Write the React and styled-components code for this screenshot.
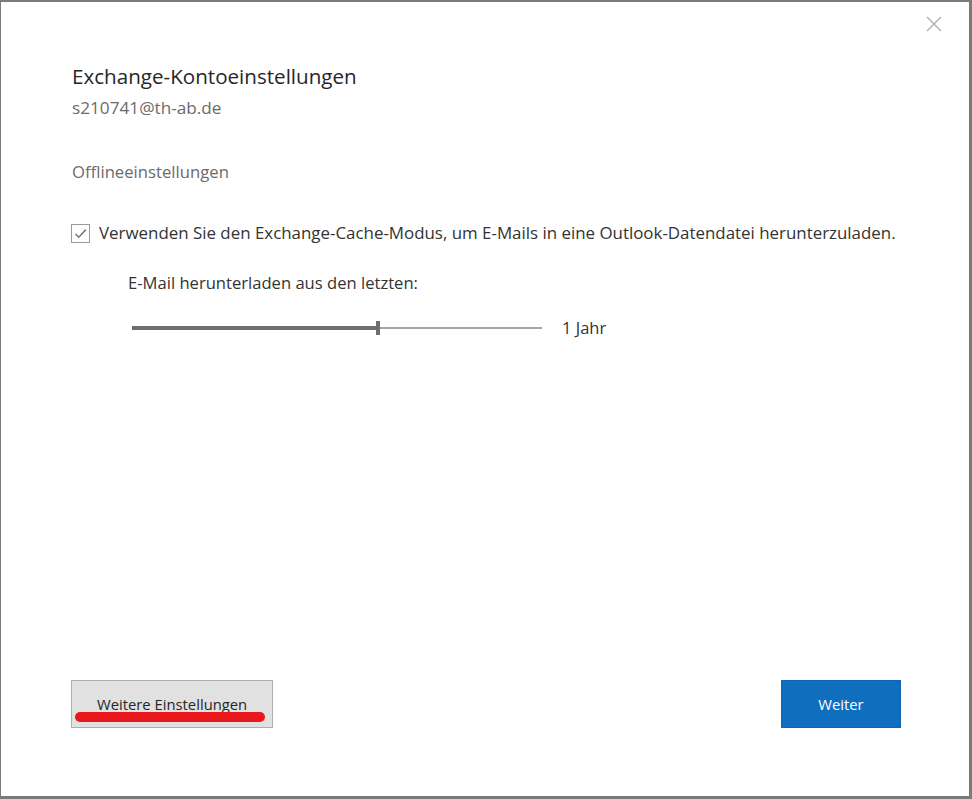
import React from "react";
import styled, { createGlobalStyle } from "styled-components";

const GlobalStyle = createGlobalStyle`
  html, body {
    margin: 0;
    padding: 0;
    background: #ffffff;
  }
  body {
    font-family: "Open Sans", "Noto Sans", "Liberation Sans", sans-serif;
  }
  * {
    box-sizing: border-box;
  }
`;

const Dialog = styled.div`
  display: flex;
  flex-direction: column;
  width: 972px;
  height: 799px;
  background: #ffffff;
  border-style: solid;
  border-color: #7b7b7b;
  border-width: 2px 3px 3px 1px;
`;

const TopBar = styled.div`
  display: flex;
  justify-content: flex-end;
  padding: 11px 24px 0 0;
  height: 36px;
`;

const CloseButton = styled.button`
  display: flex;
  align-items: center;
  justify-content: center;
  width: 22px;
  height: 22px;
  padding: 0;
  border: none;
  background: none;
  cursor: pointer;
`;

const Content = styled.div`
  flex: 1;
  display: flex;
  flex-direction: column;
  padding: 24px 0 0 70px;
`;

const Title = styled.h1`
  margin: 0 0 0 1px;
  font-size: 20.6px;
  font-weight: 400;
  line-height: 28px;
  color: #262626;
`;

const Account = styled.div`
  margin: 6px 0 0 1px;
  font-size: 17.2px;
  line-height: 24px;
  color: #6b6b6b;
`;

const SectionLabel = styled.div`
  margin: 40px 0 0 1px;
  font-size: 16.7px;
  line-height: 24px;
  color: #6b6b6b;
`;

const CheckRow = styled.label`
  display: flex;
  align-items: center;
  gap: 9px;
  margin-top: 37px;
  font-size: 16.9px;
  line-height: 24px;
  color: #333333;
`;

const Box = styled.span`
  display: flex;
  align-items: center;
  justify-content: center;
  width: 19px;
  height: 19px;
  border: 1px solid #9a9a9a;
  background: #ffffff;
  flex-shrink: 0;
`;

const Indented = styled.div`
  display: flex;
  flex-direction: column;
  padding-left: 57px;
`;

const SubLabel = styled.div`
  margin-top: 26px;
  font-size: 16.6px;
  line-height: 24px;
  color: #333333;
`;

const SliderRow = styled.div`
  display: flex;
  align-items: center;
  gap: 20px;
  margin-top: 21px;
  padding-left: 4px;
`;

const Track = styled.div`
  display: flex;
  align-items: center;
  width: 410px;
  height: 16px;
`;

const TrackFill = styled.div`
  height: 4px;
  background: #6e6e6e;
`;

const TrackRest = styled.div`
  flex: 1;
  height: 2px;
  background: #a6a6a6;
`;

const Thumb = styled.div`
  width: 4px;
  height: 14px;
  background: #6e6e6e;
  flex-shrink: 0;
`;

const Value = styled.span`
  font-size: 16.5px;
  line-height: 24px;
  color: #333333;
`;

const Footer = styled.div`
  display: flex;
  justify-content: space-between;
  align-items: flex-end;
  padding: 0 68px 68px 70px;
`;

const Button = styled.button`
  position: relative;
  height: 48px;
  padding: 0 25px;
  font-family: inherit;
  font-size: 14.8px;
  border: 1px solid ${(p) => (p.$primary ? "#0f63b0" : "#adadad")};
  background: ${(p) => (p.$primary ? "#106ebe" : "#e1e1e1")};
  color: ${(p) => (p.$primary ? "#ffffff" : "#262626")};
  cursor: pointer;
  min-width: ${(p) => (p.$primary ? "120px" : "auto")};
`;

const Marker = styled.span`
  position: absolute;
  left: 3px;
  right: 7px;
  bottom: 5px;
  height: 10px;
  border-radius: 5px;
  background: #e8181b;
`;

const Check = () => (
  <svg width="15" height="15" viewBox="0 0 15 15">
    <path
      d="M2.5 8 L5.8 11.2 L12.8 3.6"
      fill="none"
      stroke="#7a7a7a"
      strokeWidth="1.6"
    />
  </svg>
);

const CloseIcon = () => (
  <svg width="16" height="16" viewBox="0 0 16 16">
    <path d="M1 1 L15 15 M15 1 L1 15" stroke="#ababab" strokeWidth="1.3" />
  </svg>
);

const App = () => (
  <>
    <GlobalStyle />
    <Dialog>
      <TopBar>
        <CloseButton aria-label="Schließen">
          <CloseIcon />
        </CloseButton>
      </TopBar>
      <Content>
        <Title>Exchange-Kontoeinstellungen</Title>
        <Account>s210741@th-ab.de</Account>
        <SectionLabel>Offlineeinstellungen</SectionLabel>
        <CheckRow>
          <Box>
            <Check />
          </Box>
          Verwenden Sie den Exchange-Cache-Modus, um E-Mails in eine
          Outlook-Datendatei herunterzuladen.
        </CheckRow>
        <Indented>
          <SubLabel>E-Mail herunterladen aus den letzten:</SubLabel>
          <SliderRow>
            <Track>
              <TrackFill style={{ width: `${(244 / 410) * 100}%` }} />
              <Thumb />
              <TrackRest />
            </Track>
            <Value>1 Jahr</Value>
          </SliderRow>
        </Indented>
      </Content>
      <Footer>
        <Button>
          Weitere Einstellungen
          <Marker />
        </Button>
        <Button $primary>Weiter</Button>
      </Footer>
    </Dialog>
  </>
);

export default App;
